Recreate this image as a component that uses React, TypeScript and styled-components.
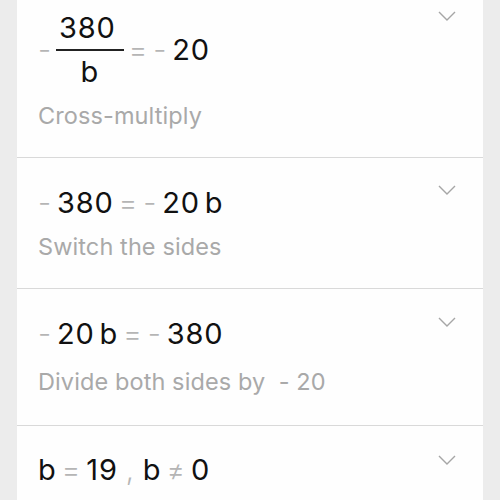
import React from 'react'
import styled, { createGlobalStyle } from 'styled-components'

const Global = createGlobalStyle`
  html, body {
    margin: 0;
    padding: 0;
    background: #ececec;
  }
  body {
    font-family: Inter, 'Liberation Sans', Arial, sans-serif;
    -webkit-font-smoothing: antialiased;
  }
`

const Page = styled.div`
  width: 500px;
  height: 500px;
  overflow: hidden;
  background: #ececec;
  display: flex;
  justify-content: center;
`

const Sheet = styled.div`
  width: 466px;
  background: #fefefe;
  display: flex;
  flex-direction: column;
`

const Step = styled.div<{ $top: number; $height: number }>`
  position: relative;
  height: ${p => p.$height}px;
  box-sizing: border-box;
  padding: ${p => p.$top}px 60px 0 21px;
  border-bottom: 1px solid #d9d9d9;
  flex-shrink: 0;
`

const Chevron = styled.svg<{ $top: number }>`
  position: absolute;
  right: 27px;
  top: ${p => p.$top}px;
  width: 18px;
  height: 10px;
`

const Math = styled.div`
  display: flex;
  align-items: center;
  gap: 5px;
  font-size: 29px;
  line-height: 32px;
  color: #111;
  letter-spacing: 0.8px;
`

const Op = styled.span<{ $space?: number }>`
  color: #b5b5b5;
  font-weight: 300;
  margin: 0 ${p => p.$space ?? 0}px;
`

const Note = styled.div<{ $gap: number }>`
  margin-top: ${p => p.$gap}px;
  font-size: 23.5px;
  line-height: 28px;
  color: #a9a9a9;
  letter-spacing: 0.1px;
`

const Frac = styled.span`
  display: inline-flex;
  flex-direction: column;
  align-items: center;
  line-height: 30px;
  margin-left: -1px;
`

const Num = styled.span`
  padding: 0 8px 6.5px 3px;
  border-bottom: 2px solid #222;
`

const Den = styled.span`
  padding-top: 5.5px;
`

const Arrow = ({ top }: { top: number }) => (
  <Chevron $top={top} viewBox="0 0 18 10">
    <path d="M1 1 L9 9 L17 1" fill="none" stroke="#a6a6a6" strokeWidth="1.4" />
  </Chevron>
)

const App: React.FC = () => {
  return (
    <Page>
      <Global />
      <Sheet>
        <Step $top={12.5} $height={158}>
          <Math>
            <Op>-</Op>
            <Frac>
              <Num>380</Num>
              <Den>b</Den>
            </Frac>
            <Op>=</Op>
            <Op>-</Op>
            <span>20</span>
          </Math>
          <Note $gap={15}>Cross-multiply</Note>
          <Arrow top={11} />
        </Step>
        <Step $top={28.5} $height={131}>
          <Math>
            <Op>-</Op>
            <span>380</span>
            <Op>=</Op>
            <Op>-</Op>
            <span>20</span>
            <span>b</span>
          </Math>
          <Note $gap={14}>Switch the sides</Note>
          <Arrow top={27} />
        </Step>
        <Step $top={28.5} $height={137}>
          <Math>
            <Op>-</Op>
            <span>20</span>
            <span>b</span>
            <Op>=</Op>
            <Op>-</Op>
            <span>380</span>
          </Math>
          <Note $gap={18}>Divide both sides by&nbsp; - 20</Note>
          <Arrow top={28} />
        </Step>
        <Step $top={28} $height={120}>
          <Math>
            <span>b</span>
            <Op>=</Op>
            <span>19</span>
            <Op $space={3}>,</Op>
            <span>b</span>
            <Op>≠</Op>
            <span>0</span>
          </Math>
          <Arrow top={29} />
        </Step>
      </Sheet>
    </Page>
  )
}

export default App
